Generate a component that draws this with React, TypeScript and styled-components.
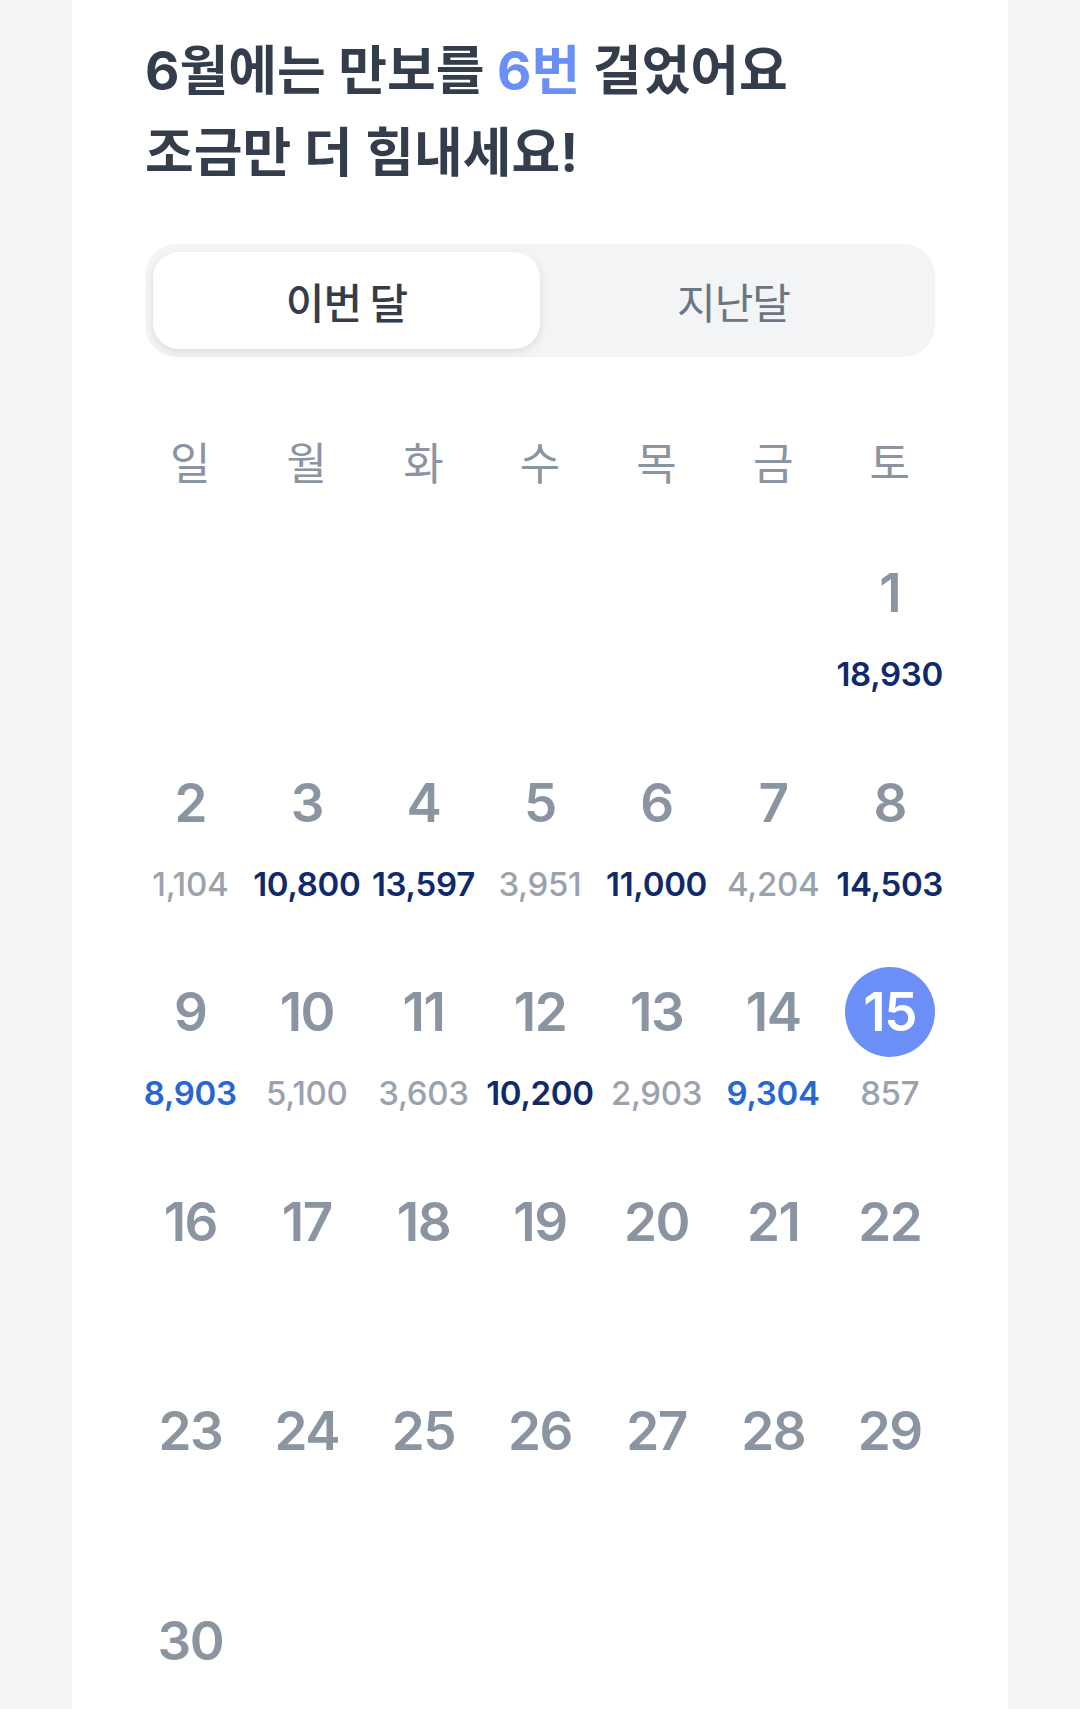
import React from "react";
import styled, { createGlobalStyle } from "styled-components";

const GlobalStyle = createGlobalStyle`
  html, body {
    margin: 0;
    padding: 0;
    background: #f2f4f6;
    overflow: hidden;
  }
  body {
    font-family: "Inter", "Noto Sans CJK KR", sans-serif;
    -webkit-font-smoothing: antialiased;
  }
  * { box-sizing: border-box; }
`;

const Page = styled.div`
  padding: 0 72px;
  min-height: 1709px;
`;

const Card = styled.section`
  background: #ffffff;
  border-radius: 32px;
  margin-top: -30px;
  padding: 60px 73px 120px;
`;

const Title = styled.h1`
  margin: 0;
  font-family: "Inter", "Noto Sans CJK KR", sans-serif;
  font-size: 53px;
  font-weight: 700;
  line-height: 82px;
  letter-spacing: 0;
  color: #333d4b;
`;

const Highlight = styled.span`
  color: #6b8ff7;
`;

const Tabs = styled.div`
  margin-top: 50px;
  display: grid;
  grid-template-columns: 1fr 1fr;
  padding: 8px;
  height: 113px;
  border-radius: 32px;
  background: #f2f4f6;
`;

const Tab = styled.button<{ $active?: boolean }>`
  border: none;
  margin: 0;
  padding: 0;
  height: 97px;
  border-radius: 26px;
  font-family: "Noto Sans CJK KR", sans-serif;
  font-size: 42px;
  font-weight: ${(p) => (p.$active ? 500 : 400)};
  letter-spacing: -1px;
  color: ${(p) => (p.$active ? "#333d4b" : "#6b7684")};
  background: ${(p) => (p.$active ? "#ffffff" : "transparent")};
  box-shadow: ${(p) => (p.$active ? "0 3px 8px rgba(0, 0, 0, 0.10)" : "none")};
  cursor: pointer;
`;

const Weekdays = styled.div`
  margin: 74px -13px 0;
  display: grid;
  grid-template-columns: repeat(7, 1fr);
  height: 60px;
  align-items: center;
`;

const Weekday = styled.div`
  text-align: center;
  font-family: "Noto Sans CJK KR", sans-serif;
  font-size: 44px;
  font-weight: 400;
  color: #8b95a1;
  line-height: 60px;
`;

const Month = styled.div`
  margin: 57px -13px 0;
  display: grid;
  grid-template-columns: repeat(7, 1fr);
  grid-auto-rows: 209.6px;
`;

const Cell = styled.div`
  display: flex;
  flex-direction: column;
  align-items: center;
`;

const DayNum = styled.div<{ $today?: boolean }>`
  width: 90px;
  height: 90px;
  border-radius: 50%;
  display: flex;
  align-items: center;
  justify-content: center;
  font-family: "Inter", sans-serif;
  font-size: 53px;
  font-weight: 600;
  letter-spacing: -1.5px;
  color: ${(p) => (p.$today ? "#ffffff" : "#8b95a1")};
  background: ${(p) => (p.$today ? "#6b8ff7" : "transparent")};
`;

type Level = "goal" | "near" | "low";

const stepColor: Record<Level, string> = {
  goal: "#10296a",
  near: "#2767d2",
  low: "#9aa3ad",
};

const Steps = styled.div<{ $level: Level }>`
  margin-top: 16px;
  height: 40px;
  line-height: 40px;
  font-family: "Inter", sans-serif;
  font-size: 33px;
  letter-spacing: -0.3px;
  white-space: nowrap;
  font-weight: ${(p) => (p.$level === "low" ? 500 : 600)};
  color: ${(p) => stepColor[p.$level]};
`;

const WEEKDAYS = ["일", "월", "화", "수", "목", "금", "토"];

const STEPS: Record<number, number> = {
  1: 18930,
  2: 1104,
  3: 10800,
  4: 13597,
  5: 3951,
  6: 11000,
  7: 4204,
  8: 14503,
  9: 8903,
  10: 5100,
  11: 3603,
  12: 10200,
  13: 2903,
  14: 9304,
  15: 857,
};

const FIRST_WEEKDAY = 6;
const DAYS = 30;
const TODAY = 15;

function levelOf(n: number): Level {
  if (n >= 10000) return "goal";
  if (n >= 8000) return "near";
  return "low";
}

export default function App() {
  const cells: (number | null)[] = [];
  for (let i = 0; i < FIRST_WEEKDAY; i++) cells.push(null);
  for (let d = 1; d <= DAYS; d++) cells.push(d);

  return (
    <>
      <GlobalStyle />
      <Page>
        <Card>
          <Title>
            6월에는 만보를 <Highlight>6번</Highlight> 걸었어요
            <br />
            조금만 더 힘내세요!
          </Title>
          <Tabs>
            <Tab $active>이번 달</Tab>
            <Tab>지난달</Tab>
          </Tabs>
          <Weekdays>
            {WEEKDAYS.map((w) => (
              <Weekday key={w}>{w}</Weekday>
            ))}
          </Weekdays>
          <Month>
            {cells.map((d, i) => {
              if (d === null) return <Cell key={`e${i}`} />;
              const s = STEPS[d];
              return (
                <Cell key={d}>
                  <DayNum $today={d === TODAY}>{d}</DayNum>
                  {s !== undefined && (
                    <Steps $level={levelOf(s)}>{s.toLocaleString("en-US")}</Steps>
                  )}
                </Cell>
              );
            })}
          </Month>
        </Card>
      </Page>
    </>
  );
}
